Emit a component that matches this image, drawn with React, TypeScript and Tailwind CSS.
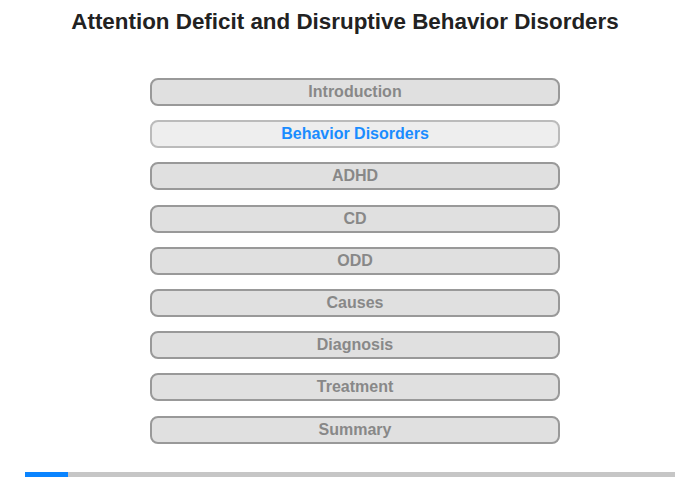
import React from 'react';

const sections = ['Introduction', 'Behavior Disorders', 'ADHD', 'CD', 'ODD', 'Causes', 'Diagnosis', 'Treatment', 'Summary'];

export default function App() {
  const active = 1;
  return (
    <div className="w-[700px] h-[480px] bg-white overflow-hidden" style={{ fontFamily: '"Liberation Sans", Arial, sans-serif' }}>
      <h1 className="pt-[8px] text-center text-[22.4px] leading-[28px] font-bold text-[#222] pr-[10px] whitespace-nowrap">
        Attention Deficit and Disruptive Behavior Disorders
      </h1>
      <div className="mt-[42px] ml-[150px] w-[410px] flex flex-col gap-[14.2px]">
        {sections.map((s, i) => (
          <div
            key={s}
            className={
              i === active
                ? 'h-[28px] rounded-[8px] border-2 border-[#bbbbbb] bg-[#eeeeee] text-[#1a8cff] flex items-center justify-center text-[16px] font-bold'
                : 'h-[28px] rounded-[8px] border-2 border-[#999999] bg-[#e0e0e0] text-[#888888] flex items-center justify-center text-[16px] font-bold'
            }
          >
            {s}
          </div>
        ))}
      </div>
      <div className="mt-[28px] mx-[25px] h-[5px] bg-[#c6c6c6] flex">
        <div className="w-[43px] h-full bg-[#0a84ff]" />
      </div>
    </div>
  );
}
